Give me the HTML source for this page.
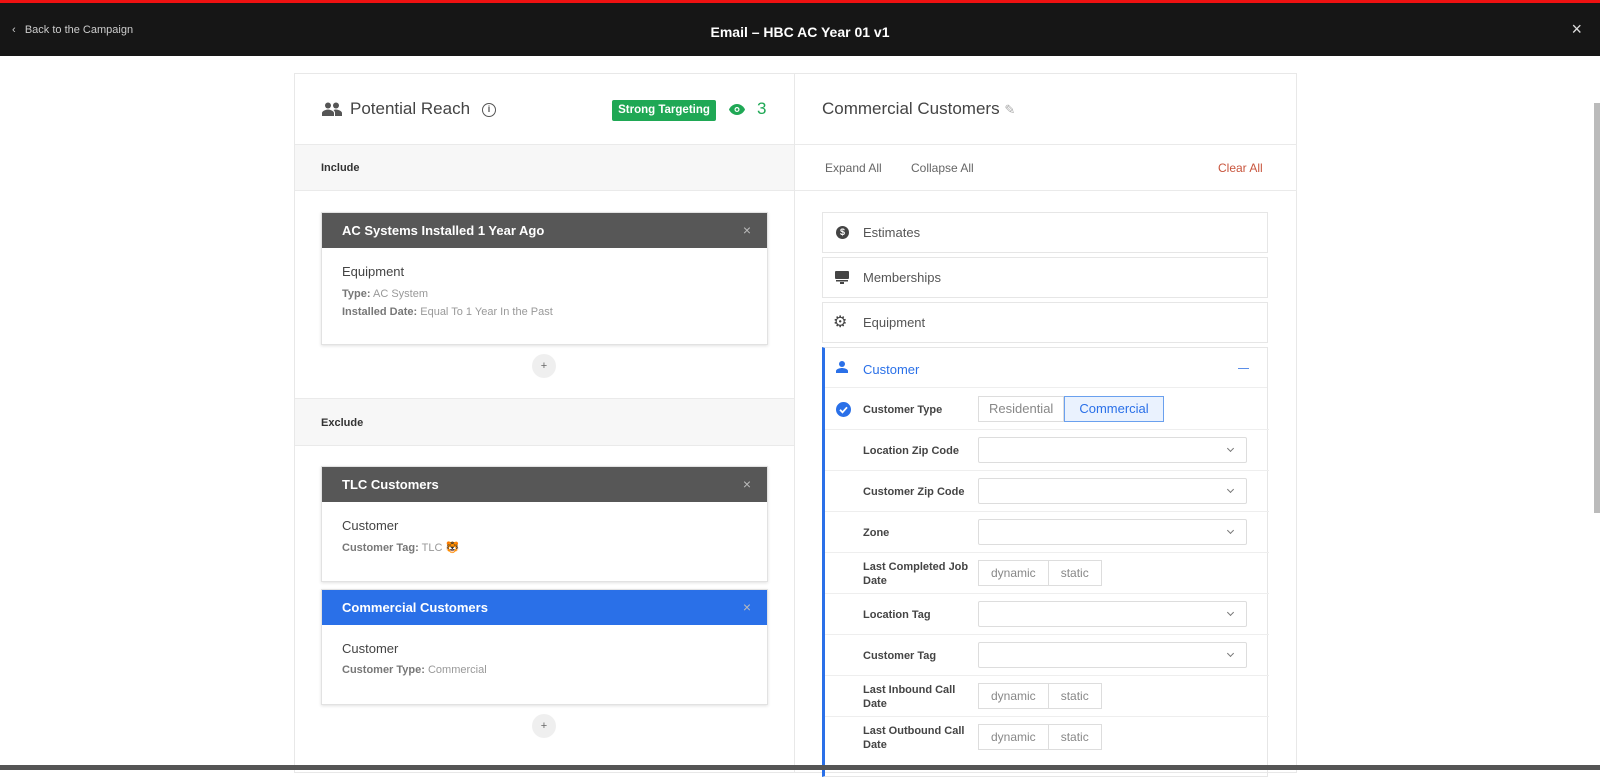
<!DOCTYPE html>
<html><head><style>
*{box-sizing:border-box;margin:0;padding:0}
body{width:1600px;height:770px;overflow:hidden;background:#fff;font-family:"Liberation Sans",sans-serif;color:#333;position:relative}
.a{position:absolute}
.top{left:0;top:0;width:1600px;height:56px;background:#161616;border-top:3px solid #e11;}
.card{border:1px solid #e2e2e2;box-shadow:0 1px 3px rgba(0,0,0,.12);background:#fff}
.ch{color:#fff;font-weight:bold;font-size:13px;padding-left:20px;line-height:35px}
.ch .x{position:absolute;right:16px;top:0;color:#bbb;font-weight:normal;font-size:14px}
.sm{font-size:11px;color:#999}.sm b{color:#777}
.plus{width:24px;height:24px;border-radius:12px;background:#efefef;text-align:center;line-height:24px;font-size:11px;color:#666}
.acc{left:822px;width:446px;height:41px;border:1px solid #e6e6e6;font-size:13px;color:#555;line-height:40px;padding-left:40px}
.row{left:825px;width:444px;border-bottom:1px solid #eee;height:41px}
.lbl{position:absolute;left:38px;font-size:11px;font-weight:bold;color:#444;line-height:14px}
.sel{position:absolute;left:153px;top:7px;width:269px;height:26px;border:1px solid #ddd;border-radius:2px}
.sel:after{content:"";position:absolute;right:13px;top:8px;width:4px;height:4px;border-right:1.3px solid #777;border-bottom:1.3px solid #777;transform:rotate(45deg)}
.seg{position:absolute;left:153px;top:7px;height:26px;display:flex;font-size:12px;color:#888}
.seg span{border:1px solid #ddd;padding:0 12px;line-height:24px}
.seg span+span{border-left:none}
</style></head><body>
<div class="a top">
<div class="a" style="left:12px;top:21px;color:#ccc;font-size:11px">‹ &nbsp; Back to the Campaign</div>
<div class="a" style="left:0;width:1600px;top:21px;text-align:center;color:#fff;font-weight:bold;font-size:14px">Email – HBC AC Year 01 v1</div>
<div class="a" style="right:18px;top:16px;color:#ddd;font-size:18px">×</div>
</div>
<div class="a" style="left:1594px;top:103px;width:6px;height:410px;background:#bbb"></div>

<div class="a" style="left:294px;top:73px;width:1003px;height:700px;border:1px solid #e8e8e8"></div>
<div class="a" style="left:794px;top:73px;width:1px;height:700px;background:#e8e8e8"></div>
<svg class="a" style="left:322px;top:102px" width="20" height="14" viewBox="0 0 20 14"><circle cx="6" cy="3.5" r="3" fill="#555"/><circle cx="14" cy="3.5" r="3" fill="#555"/><path d="M0 14v-3c0-2 4-3.5 6-3.5s6 1.5 6 3.5v3zM13 14v-3c0-1-0.5-2-1.5-3 1-.3 2-.5 2.5-.5 2 0 6 1.5 6 3.5v3z" fill="#555"/></svg>
<div class="a" style="left:350px;top:99px;font-size:17px;color:#444">Potential Reach</div>
<div class="a" style="left:482px;top:103px;width:14px;height:14px;border:1.5px solid #555;border-radius:50%;font-size:9px;text-align:center;line-height:11px;font-weight:bold;color:#555">i</div>
<div class="a" style="left:612px;top:100px;width:104px;height:21px;background:#1fa855;border-radius:2px;color:#fff;font-size:11.5px;font-weight:bold;text-align:center;line-height:21px">Strong Targeting</div>
<svg class="a" style="left:729px;top:104px" width="16" height="11" viewBox="0 0 16 11"><path d="M8 0C4 0 1 3 0 5.5 1 8 4 11 8 11s7-3 8-5.5C15 3 12 0 8 0z" fill="#1fa855"/><circle cx="8" cy="5.5" r="2.5" fill="#fff"/><circle cx="8" cy="5.5" r="1.3" fill="#1fa855"/></svg>
<div class="a" style="left:757px;top:99px;font-size:17px;color:#1fa855">3</div>

<div class="a" style="left:295px;top:144px;width:499px;height:47px;background:#f7f7f7;border-top:1px solid #eaeaea;border-bottom:1px solid #eaeaea"></div>
<div class="a" style="left:321px;top:162px;font-size:11px;font-weight:bold;color:#333">Include</div>

<div class="a card" style="left:321px;top:212px;width:447px;height:133px">
<div class="ch" style="background:#575757;position:relative">AC Systems Installed 1 Year Ago<span class="x">×</span></div>
<div style="padding:16px 20px"><div style="font-size:13px;color:#444;margin-bottom:6px">Equipment</div>
<div class="sm" style="line-height:18px"><b>Type:</b> AC System<br><b>Installed Date:</b> Equal To 1 Year In the Past</div></div>
</div>
<div class="a plus" style="left:532px;top:354px">+</div>

<div class="a" style="left:295px;top:398px;width:499px;height:48px;background:#f7f7f7;border-top:1px solid #eaeaea;border-bottom:1px solid #eaeaea"></div>
<div class="a" style="left:321px;top:417px;font-size:11px;font-weight:bold;color:#333">Exclude</div>

<div class="a card" style="left:321px;top:466px;width:447px;height:116px">
<div class="ch" style="background:#575757;position:relative">TLC Customers<span class="x">×</span></div>
<div style="padding:16px 20px"><div style="font-size:13px;color:#444;margin-bottom:8px">Customer</div>
<div class="sm"><b>Customer Tag:</b> TLC 🐯</div></div>
</div>
<div class="a card" style="left:321px;top:589px;width:447px;height:116px">
<div class="ch" style="background:#2a70e8;position:relative">Commercial Customers<span class="x">×</span></div>
<div style="padding:16px 20px"><div style="font-size:13px;color:#444;margin-bottom:8px">Customer</div>
<div class="sm"><b>Customer Type:</b> Commercial</div></div>
</div>
<div class="a plus" style="left:532px;top:714px">+</div>

<div class="a" style="left:822px;top:99px;font-size:17px;color:#444">Commercial Customers <span style="color:#aaa;font-size:13px">✎</span></div>
<div class="a" style="left:795px;top:144px;width:502px;height:47px;border-top:1px solid #eaeaea;border-bottom:1px solid #eaeaea"></div>
<div class="a" style="left:825px;top:161px;font-size:12px;color:#666">Expand All</div>
<div class="a" style="left:911px;top:161px;font-size:12px;color:#666">Collapse All</div>
<div class="a" style="left:1218px;top:161px;font-size:12px;color:#c8553d">Clear All</div>

<div class="a acc" style="top:212px">Estimates</div>
<div class="a" style="left:836px;top:226px;width:13px;height:13px;border-radius:50%;background:#444;color:#fff;font-size:9px;text-align:center;line-height:13px;font-weight:bold">$</div>
<div class="a acc" style="top:257px">Memberships</div>
<svg class="a" style="left:835px;top:271px" width="14" height="13" viewBox="0 0 14 13"><rect x="0" y="0" width="14" height="8" rx="1" fill="#444"/><rect x="1" y="9" width="12" height="1.5" fill="#444"/><rect x="5" y="11" width="4" height="2" fill="#444"/></svg>
<div class="a acc" style="top:302px">Equipment</div>
<div class="a" style="left:833px;top:312px;font-size:16px;color:#444">⚙</div>

<div class="a" style="left:822px;top:347px;width:446px;height:430px;border:1px solid #e6e6e6;border-left:3px solid #2a70e8"></div>
<div class="a" style="left:825px;top:348px;width:442px;height:40px;border-bottom:1px solid #eee"></div>
<svg class="a" style="left:836px;top:361px" width="12" height="12" viewBox="0 0 12 12"><circle cx="6" cy="3" r="3" fill="#2a70e8"/><path d="M0 12v-2c0-2 4-3 6-3s6 1 6 3v2z" fill="#2a70e8"/></svg>
<div class="a" style="left:863px;top:362px;font-size:13px;color:#2a70e8">Customer</div>
<div class="a" style="left:1238px;top:368px;width:11px;height:1px;background:#5b8ee8"></div>

<div class="a row" style="top:389px"><svg class="a" style="left:11px;top:13px" width="15" height="15" viewBox="0 0 15 15"><circle cx="7.5" cy="7.5" r="7.5" fill="#2a70e8"/><path d="M4 7.8l2.5 2.5 4.5-5" stroke="#fff" stroke-width="1.8" fill="none"/></svg><span class="lbl" style="top:14px">Customer Type</span>
<div class="seg" style="color:#888;font-size:13px"><span style="padding:0 10px">Residential</span><span style="border:1px solid #6aa0ee;background:#eaf2fe;color:#2a70e8;padding:0 14px">Commercial</span></div></div>
<div class="a row" style="top:430px"><span class="lbl" style="top:14px">Location Zip Code</span><div class="sel"></div></div>
<div class="a row" style="top:471px"><span class="lbl" style="top:14px">Customer Zip Code</span><div class="sel"></div></div>
<div class="a row" style="top:512px"><span class="lbl" style="top:14px">Zone</span><div class="sel"></div></div>
<div class="a row" style="top:553px"><span class="lbl" style="top:7px">Last Completed Job<br>Date</span><div class="seg"><span>dynamic</span><span>static</span></div></div>
<div class="a row" style="top:594px"><span class="lbl" style="top:14px">Location Tag</span><div class="sel"></div></div>
<div class="a row" style="top:635px"><span class="lbl" style="top:14px">Customer Tag</span><div class="sel"></div></div>
<div class="a row" style="top:676px"><span class="lbl" style="top:7px">Last Inbound Call<br>Date</span><div class="seg"><span>dynamic</span><span>static</span></div></div>
<div class="a row" style="top:717px;border:none"><span class="lbl" style="top:7px">Last Outbound Call<br>Date</span><div class="seg"><span>dynamic</span><span>static</span></div></div>
<div class="a" style="left:0;top:765px;width:1600px;height:5px;background:#555"></div>
</body></html>
